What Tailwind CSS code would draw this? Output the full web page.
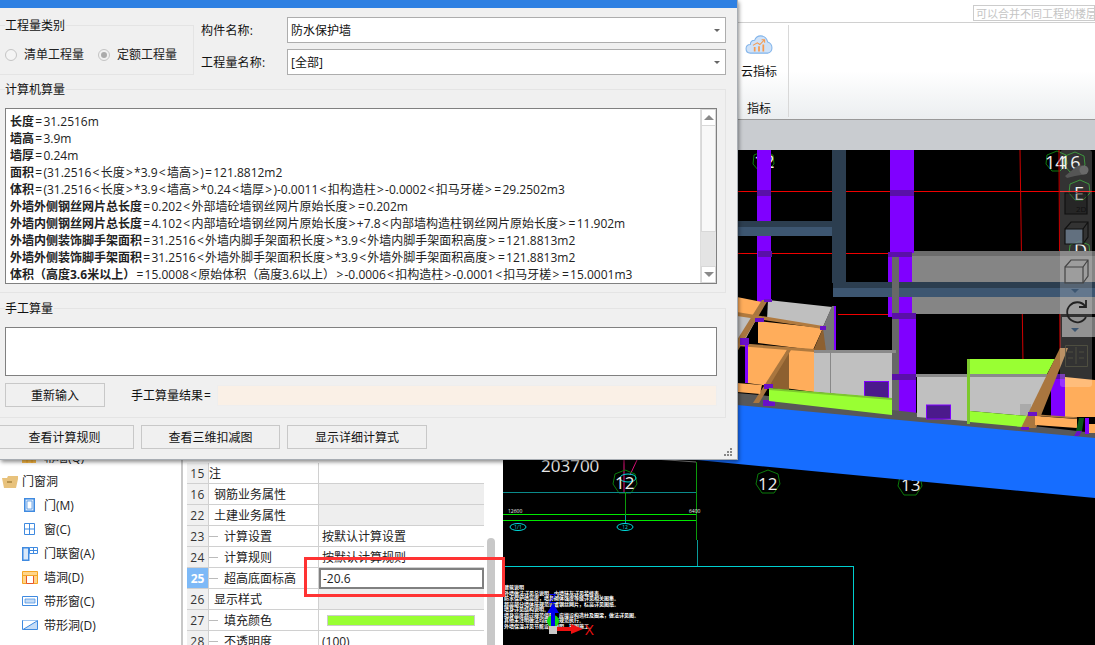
<!DOCTYPE html>
<html lang="zh-CN">
<head>
  <meta charset="UTF-8" />
  <title>工程量</title>
  <script src="https://cdn.jsdelivr.net/npm/@tailwindcss/browser@4"></script>
</head>
<body class="bg-white">
<div class="relative w-[1095px] h-[645px] overflow-hidden text-[12px] leading-[17px] text-[#111] font-['Open_Sans','Noto_Sans_CJK_SC',sans-serif]">

  <!-- main window -->
  <header class="h-[150px] flex flex-col">
    <div class="h-[23px] border-b border-[#d0d0d0] flex justify-end pt-[5px]">
      <div class="w-[122px] h-[16px] border border-[#ccc] pl-[2px] text-[11px] text-[#c4c4c4] leading-[15px] whitespace-nowrap overflow-hidden">可以合并不同工程的楼层</div>
    </div>
    <div class="h-[97px] pl-[737px] flex bg-linear-to-b from-white from-50% to-[#ebeef0] border-b border-[#999]">
      <div class="w-[52px] pr-[7px] my-[2px] border-r border-[#d8d8d8] flex flex-col items-center">
        <svg class="mt-[10px]" width="32" height="22" viewBox="0 0 32 22">
          <path d="M6 21C2 21 1 18 1 16c0-3 2-5 5-5 0-3 2-5 5-5 1-3 4-5 7-5 4 0 7 3 8 7 3 1 5 4 5 7 0 3-2 6-5 6z" fill="#cfe2f8" stroke="#82b4ea" stroke-width="1.2"/>
          <path d="M10 19v-5h2v5zM15 19v-6h2v6zM20 19v-8h2v8z" fill="#f79a4e"/>
          <path d="M9 12l5-3 3 2 5-5M19 5.500h3.500V9" fill="none" stroke="#f79a4e" stroke-width="1.200"/>
        </svg>
        <div class="mt-[9px]">云指标</div>
        <div class="mt-[20px]">指标</div>
      </div>
    </div>
    <div class="flex-1 bg-[#c9ccd0]"></div>
  </header>

  <div class="flex h-[495px]">
    <!-- tree -->
    <aside class="w-[183px] shrink-0 border-r-2 border-[#c8c8c8] pt-[295px] text-[#222]">
      <div class="h-[24px] pl-[22px] flex items-center gap-[6px]">
        <svg width="16" height="12" viewBox="0 0 16 12"><path d="M0 2h14v10H0z" fill="#ffc04d"/><path d="M0 5.500h14M5 2v10M10 2v10" stroke="#f5a623"/></svg>
        <span>幕墙(Q)</span>
      </div>
      <div class="h-[24px] pl-[2px] flex items-center gap-[4px]">
        <svg width="16" height="13" viewBox="0 0 16 13"><path d="M0 3h5l1-2h10v3l-2 9H2z" fill="#e8c27c"/><path d="M5 7h5" stroke="#a8843f" stroke-width="1.500"/></svg>
        <span>门窗洞</span>
      </div>
      <div class="h-[24px] pl-[24px] flex items-center gap-[9px]">
        <svg width="11" height="14" viewBox="0 0 11 14"><path d="M.750.750h9.500v12.500H.750z" fill="#dbe9f9" stroke="#3f8ae0" stroke-width="1.500"/><path d="M3 3h5v8H3z" fill="#fff" stroke="#3f8ae0" stroke-width=".7"/></svg>
        <span>门(M)</span>
      </div>
      <div class="h-[24px] pl-[24px] flex items-center gap-[9px]">
        <svg width="11" height="12" viewBox="0 0 11 12"><path d="M.500.500h10v11H.500zM5.500.500v11M.500 6h10" fill="#fff" stroke="#3f8ae0"/></svg>
        <span>窗(C)</span>
      </div>
      <div class="h-[24px] pl-[22px] flex items-center gap-[6px]">
        <svg width="16" height="15" viewBox="0 0 16 15"><path d="M.750 1.750h6v12.500h-6z" fill="#dbe9f9" stroke="#3f8ae0" stroke-width="1.500"/><path d="M7.500 1.500h8v6h-8zM11.500 1.500v6M7.500 4.500h8" fill="#fff" stroke="#3f8ae0"/></svg>
        <span>门联窗(A)</span>
      </div>
      <div class="h-[24px] pl-[22px] flex items-center gap-[6px]">
        <svg width="16" height="13" viewBox="0 0 16 13"><path d="M.500.500h15v12H.500z" fill="#ffd58a" stroke="#f5a623"/><path d="M4.500 4.500h7v8h-7z" fill="#fff" stroke="#e8562a"/><path d="M.500 4.500h15" stroke="#f5a623"/></svg>
        <span>墙洞(D)</span>
      </div>
      <div class="h-[24px] pl-[22px] flex items-center gap-[6px]">
        <svg width="16" height="10" viewBox="0 0 16 10"><path d="M.500.500h15v9H.500z" fill="#fff" stroke="#3f8ae0"/><path d="M3 3h10v4H3z" fill="#c5dcf6" stroke="#3f8ae0" stroke-width=".7"/></svg>
        <span>带形窗(C)</span>
      </div>
      <div class="h-[24px] pl-[22px] flex items-center gap-[6px]">
        <svg width="16" height="10" viewBox="0 0 16 10"><path d="M.500.500h15v9H.500z" fill="#c5dcf6" stroke="#3f8ae0"/><path d="M1 9.500L15 1V.500H1z" fill="#fff"/><path d="M1 9.500L15 1" stroke="#3f8ae0"/></svg>
        <span>带形洞(D)</span>
      </div>
    </aside>

    <!-- properties -->
    <section class="w-[320px] shrink-0 flex pt-[313px] pl-[4px]">
      <div class="w-[298px] grid grid-cols-[22px_110px_165px] auto-rows-[21px] content-start text-[#222]">
        <div class="bg-[#f0f0f0] border-b border-[#d0d0d0] border-r flex items-center justify-center text-[#333] tracking-[.3px]">15</div>
        <div class="border-b border-r border-[#d0d0d0] flex items-center">注</div>
        <div class="border-b border-[#d0d0d0]"></div>

        <div class="bg-[#f0f0f0] border-b border-[#d0d0d0] border-r flex items-center justify-center text-[#333] tracking-[.3px]">16</div>
        <div class="border-b border-r border-[#d0d0d0] flex items-center pl-[5px]">钢筋业务属性</div>
        <div class="border-b border-[#d0d0d0] bg-[#eee]"></div>

        <div class="bg-[#f0f0f0] border-b border-[#d0d0d0] border-r flex items-center justify-center text-[#333] tracking-[.3px]">22</div>
        <div class="border-b border-r border-[#d0d0d0] flex items-center pl-[5px]">土建业务属性</div>
        <div class="border-b border-[#d0d0d0] bg-[#eee]"></div>

        <div class="bg-[#f0f0f0] border-b border-[#d0d0d0] border-r flex items-center justify-center text-[#333] tracking-[.3px]">23</div>
        <div class="border-b border-r border-[#d0d0d0] flex items-center gap-[6px]"><span class="w-[9px] h-px bg-[#bbb]"></span>计算设置</div>
        <div class="border-b border-[#d0d0d0] flex items-center pl-[3px]">按默认计算设置</div>

        <div class="bg-[#f0f0f0] border-b border-[#d0d0d0] border-r flex items-center justify-center text-[#333] tracking-[.3px]">24</div>
        <div class="border-b border-r border-[#d0d0d0] flex items-center gap-[6px]"><span class="w-[9px] h-px bg-[#bbb]"></span>计算规则</div>
        <div class="border-b border-[#d0d0d0] flex items-center pl-[3px]">按默认计算规则</div>

        <div class="bg-[#7db9f7] border-b border-[#d0d0d0] border-r flex items-center justify-center text-white font-bold">25</div>
        <div class="border-b border-r border-[#d0d0d0] flex items-center gap-[6px]"><span class="w-[9px] h-px bg-[#bbb]"></span>超高底面标高</div>
        <div class="border-2 border-[#808080] flex items-center pl-[2px] bg-white">-20.6</div>

        <div class="bg-[#f0f0f0] border-b border-[#d0d0d0] border-r flex items-center justify-center text-[#333] tracking-[.3px]">26</div>
        <div class="border-b border-r border-[#d0d0d0] flex items-center pl-[5px]">显示样式</div>
        <div class="border-b border-[#d0d0d0] bg-[#eee]"></div>

        <div class="bg-[#f0f0f0] border-b border-[#d0d0d0] border-r flex items-center justify-center text-[#333] tracking-[.3px]">27</div>
        <div class="border-b border-r border-[#d0d0d0] flex items-center gap-[6px]"><span class="w-[9px] h-px bg-[#bbb]"></span>填充颜色</div>
        <div class="border-b border-[#d0d0d0] flex items-center pl-[8px]"><div class="w-[148px] h-[11px] bg-[#99ff33] border border-[#ccc]"></div></div>

        <div class="bg-[#f0f0f0] border-b border-[#d0d0d0] border-r flex items-center justify-center text-[#333] tracking-[.3px]">28</div>
        <div class="border-b border-r border-[#d0d0d0] flex items-center gap-[6px]"><span class="w-[9px] h-px bg-[#bbb]"></span>不透明度</div>
        <div class="border-b border-[#d0d0d0] flex items-center pl-[3px]">(100)</div>
      </div>
      <div class="w-[8px] ml-[2px] mt-[75px] bg-[#c8c8c8] rounded-t-[4px]"></div>
    </section>

    <!-- 3D view -->
    <main class="flex-1 bg-black">
      <svg width="592" height="495" viewBox="503 150 592 495" class="block">
        <!-- plan drawing, lies under the model -->
        <text x="541" y="472" font-size="17" fill="#e8e8e8">203700</text>
        <path d="M640 458L696 462" stroke="#888" fill="none"/>
        <path d="M624 460V492M637 460L630 475" stroke="#e0107a" stroke-width="1" fill="none"/>
        <g fill="none" stroke="#0a7a0a" stroke-width="1">
          <path d="M625 470l10 4 2 10-6 9h-12l-6-9 2-10z"/>
          <path d="M768 470l10 4 2 10-6 9h-12l-6-9 2-10z"/>
          <path d="M910 472l10 4 2 10-6 9h-12l-6-9 2-10z"/>
        </g>
        <ellipse cx="628" cy="478" rx="8" ry="4" fill="none" stroke="#00dede"/>
        <g fill="#eee" font-size="17">
          <text x="615" y="489">12</text>
          <text x="758" y="490">12</text>
          <text x="901" y="491">13</text>
        </g>
        <g shape-rendering="crispEdges" fill="none">
          <path d="M503 492H696" stroke="#0a8a8a"/>
          <path d="M696 462V540" stroke="#0b9a0b"/>
          <path d="M697 540V566" stroke="#0a9a9a"/>
          <path d="M503 514H696M503 520H696" stroke="#00e800"/>
          <path d="M625 492V515" stroke="#0b9a0b"/>
          <path d="M625 515V523" stroke="#0a9a9a"/>
          <path d="M503 566H853M853 566V645" stroke="#00cfcf"/>
        </g>
        <g fill="#eee" font-size="5">
          <text x="508" y="513">12600</text>
          <text x="689" y="513">6400</text>
        </g>
        <ellipse cx="518" cy="527" rx="8" ry="3.500" fill="none" stroke="#00dede"/>
        <ellipse cx="625" cy="527" rx="8" ry="3.500" fill="none" stroke="#00dede"/>
        <g fill="#00dede" font-size="5" text-anchor="middle">
          <text x="518" y="529">1/1</text>
          <text x="625" y="529">12</text>
        </g>
        <g fill="#fff" font-size="5" font-weight="700">
          <text x="504" y="589">建筑说明</text>
          <text x="504" y="595">外墙做法详见总说明，内墙抹灰详见装修表。</text>
          <text x="504" y="600">防水保护墙高度，墙身砌体强度等级详见相关图集。</text>
          <text x="504" y="606">超高部分墙体按规范设置钢丝网片，标高详见图纸。</text>
          <text x="504" y="611">墙身详见结构说明。</text>
          <text x="504" y="617">墙身高度超过规范值时，应增设构造柱及圈梁，做法详见图。</text>
          <text x="504" y="622">其他未注明做法均按现行规范执行。</text>
          <text x="504" y="628">外墙保温详见节能设计说明，按图施工。</text>
        </g>
        <circle cx="553" cy="621" r="6" fill="#11dd11"/>
        <path d="M551 626V613H547L553 603L559 613H555V626z" fill="#0000ee"/>
        <path d="M557 627H571V624L583 629L571 634V631H557z" fill="#ee1111"/>
        <rect x="549" y="626" width="8" height="8" fill="#c8c8c8"/>
        <text x="549" y="603" font-size="13" fill="#0000ee">Z</text>
        <text x="585" y="635" font-size="15" fill="#ee1111">X</text>

        <!-- axis bubbles behind the model -->
        <g fill="none" stroke="#119a11" stroke-width=".8">
          <path d="M764 151l9 4 1 9-7 7h-8l-6-7 1-9z"/>
          <path d="M903 151l9 4 1 9-7 7h-8l-6-7 1-9z"/>
          <path d="M1057 151l9 4 1 9-7 7h-8l-6-7 1-9z"/>
          <path d="M1075 152l9 4 1 9-7 7h-8l-6-7 1-9z"/>
          <path d="M1080 180l9 4 1 9-7 7h-8l-6-7 1-9z"/>
          <path d="M1080 241l9 4 1 9-7 7h-8l-6-7 1-9z"/>
        </g>
        <g fill="#eee" font-size="18">
          <text x="754" y="168">12</text>
          <text x="893" y="168">13</text>
          <text x="1045" y="169">14</text>
          <text x="1060" y="169">16</text>
          <text x="1074" y="200">E</text>
          <text x="1074" y="257">D</text>
        </g>

        <!-- red grid -->
        <path d="M737 191H1095M737 253H1060M838 314H900" stroke="#f00000" shape-rendering="crispEdges" fill="none"/>
        <path d="M1020 150L1023 363M1059 150L1060 350" stroke="#d00000" fill="none"/>

        <!-- beams and columns behind -->
        <rect x="757" y="150" width="14" height="152" fill="#8000ff"/>
        <rect x="757" y="190" width="14" height="6" fill="#5a10a8"/>
        <rect x="758" y="251" width="14" height="6" fill="#5a10a8"/>
        <rect x="912" y="251" width="183" height="63" fill="#858585"/>
        <rect x="912" y="251" width="183" height="5" fill="#6c6c6c"/>
        <rect x="890" y="150" width="24" height="103" fill="#8000ff"/>
        <rect x="890" y="190" width="24" height="6" fill="#5a10a8"/>
        <rect x="888" y="252" width="24" height="65" fill="#8000ff"/>
        <rect x="888" y="252" width="24" height="5" fill="#5a10a8"/>
        <rect x="737" y="221" width="96" height="6" fill="#2c3e50"/>
        <rect x="737" y="227" width="96" height="9" fill="#3d5671"/>
        <rect x="832" y="150" width="14" height="133" fill="#2c3e50"/>
        <rect x="833" y="282" width="262" height="6" fill="#2c3e50"/>
        <rect x="833" y="288" width="262" height="9" fill="#3d5671"/>
        <rect x="892" y="257" width="7" height="160" fill="#686868"/>
        <rect x="899" y="317" width="17" height="100" fill="#8000ff"/>
        <rect x="892" y="313" width="24" height="6" fill="#5a10a8"/>
        <rect x="892" y="374" width="24" height="6" fill="#5a10a8"/>
        <path d="M1062 317H1095V337H1062z" fill="#777"/>

        <!-- blue slab -->
        <path d="M737 404L1095 437V498L697 460V400z" fill="#166dff"/>
        <path d="M737 393L760 395L1095 433V438L737 405z" fill="#585858"/>

        <!-- left rooms -->
        <path d="M737 297L762 302L755 316L737 313z" fill="#ffad5b"/>
        <path d="M768 300L832 307L823 327L767 320z" fill="#bfbfbf"/>
        <path d="M832 306L836 306V351H823V327z" fill="#777"/>
        <rect x="834" y="306" width="2" height="45" fill="#8000ff"/>
        <path d="M737 315L757 318L745 340L737 339z" fill="#bfbfbf"/>
        <path d="M758 321L823 328L813 350L758 343z" fill="#ffad5b"/>
        <path d="M823 328L826 351H813z" fill="#8d6030"/>
        <path d="M762 300L768 300L737 352V340z" fill="#a9763f"/>
        <path d="M737 312L823 326V329L737 316z" fill="#b07a3f"/>
        <path d="M747 345L814 351V392L747 383z" fill="#ffad5b"/>
        <path d="M737 343L814 349V352L737 346z" fill="#b07a3f"/>
        <path d="M787 350L768 388L789 390V350z" fill="#8d6030"/>
        <path d="M787 350L791 350L759 403H753z" fill="#a9763f"/>
        <path d="M737 383L762 385L760 394L737 392z" fill="#ffad5b"/>
        <rect x="745" y="345" width="3" height="38" fill="#8000ff"/>
        <rect x="740" y="338" width="9" height="7" fill="#6a10c8"/>
        <rect x="755" y="318" width="9" height="4" fill="#6a10c8"/>
        <rect x="764" y="384" width="9" height="5" fill="#6a10c8"/>
        <rect x="763" y="400" width="12" height="6" fill="#6a10c8"/>
        <rect x="764" y="299" width="8" height="3" fill="#6a10c8"/>
        <rect x="820" y="326" width="6" height="4" fill="#6a10c8"/>

        <!-- walls -->
        <path d="M814 351H892V399L814 392z" fill="#c0c0c0"/>
        <path d="M814 350H896V353H814z" fill="#8a8a8a"/>
        <path d="M830.500 351V393" stroke="#888" stroke-width="1"/>
        <rect x="864.500" y="381.500" width="24" height="17" fill="#4b1a8c" stroke="#8000ff"/>
        <path d="M769 389L892 399V415L769 401z" fill="#99ff33"/>
        <path d="M769 388L892 398V400L769 390z" fill="#7cc92d"/>
        <path d="M917 374H967V421L917 417z" fill="#c0c0c0"/>
        <rect x="926.500" y="405" width="24" height="14" fill="#4b1a8c" stroke="#8000ff"/>
        <path d="M967 359H1055L1047 374H970z" fill="#99ff33"/>
        <path d="M970 374H1050L1028 416L970 411z" fill="#c0c0c0"/>
        <path d="M916 374H1050V377H916z" fill="#8a8a8a"/>
        <rect x="1020" y="404" width="11" height="11" fill="#aaa"/>
        <path d="M970 411L1028 416L1022 427L970 422z" fill="#99ff33"/>
        <rect x="967" y="359" width="3" height="65" fill="#7cc92d"/>

        <!-- right rooms -->
        <path d="M1065 377L1095 380V417H1065z" fill="#ffad5b"/>
        <rect x="1051" y="374" width="14" height="43" fill="#8000ff"/>
        <rect x="1051" y="374" width="14" height="5" fill="#5a10a8"/>
        <path d="M1060 348L1068 348L1036 428H1021z" fill="#a9763f"/>
        <path d="M1035 416L1077 419V428L1035 425z" fill="#ffad5b"/>
        <path d="M1035 415L1077 418" stroke="#a9763f" stroke-width="1.500"/>
        <rect x="1028" y="412" width="9" height="4" fill="#6a10c8"/>
        <rect x="1021" y="427" width="8" height="3" fill="#6a10c8"/>
        <path d="M1079 418H1084L1082 431H1076z" fill="#0a5a1a"/>
        <path d="M1077 431H1082L1079 436H1074z" fill="#6a10c8"/>
        <rect x="1085" y="418" width="4" height="16" fill="#8000ff"/>
        <path d="M1089 424H1095V433H1089z" fill="#ffad5b"/>

        <!-- view toolbar -->
        <rect x="1060" y="150" width="32" height="237" rx="3" fill="#fff" fill-opacity=".2"/>
        <path d="M1065 176l11-9c4-3 11-1 11 3 0 3-3 5-6 5l-6 1-8 2z" fill="#555"/>
        <circle cx="1084" cy="170" r="4.500" fill="#6a6a6a"/>
        <g fill="none" stroke="#111" stroke-width="1.200">
          <path d="M1065 193h22v21h-22z" fill="#000" fill-opacity=".25"/>
          <path d="M1065 229h18v15h-18z" fill="#6e8092" fill-opacity=".8"/>
          <path d="M1065 229l6-7h17v15l-5 7M1083 229l5-7"/>
          <path d="M1065 267h18v16h-18z" stroke="#444"/>
          <path d="M1065 267l6-7h17v16l-5 7M1083 267l5-7" stroke="#444"/>
          <path d="M1085 306a10 10 0 1 0 1 11M1086 300v7h-7" stroke="#222" stroke-width="1.800"/>
        </g>
        <g fill="none" stroke="#554" stroke-opacity=".8">
          <path d="M1065.500 345.500h22v21h-22zM1076 347v17"/>
          <path d="M1068 352h5M1068 358h5M1079 352h5M1079 358h5"/>
        </g>
        <path d="M1071 289h8l-4 4zM1071 328h8l-4 4z" fill="#3d5671"/>
        <text x="1076" y="212" font-size="8" fill="#111">2D</text>
      </svg>
    </main>
  </div>

  <!-- red mark on the screenshot -->
  <div class="absolute left-[304px] top-[557px] w-[201px] h-[40px] border-[3px] border-[#f33]"></div>

  <!-- dialog -->
  <div class="absolute left-0 top-0 w-[738px] h-[460px] bg-[#f0f0f0] border-r border-b border-[#a8adb3] shadow-[1px_2px_4px_rgba(0,0,0,.45)] flex flex-col">
    <div class="h-[8px] bg-[#2e80e2] shrink-0"></div>

    <div class="flex mt-[9px] ml-[-1px] h-[58px]">
      <fieldset class="w-[195px] h-[58px] border border-[#e4e4e4]">
        <legend class="ml-[5px] pr-[1px] h-[17px]">工程量类别</legend>
        <div class="flex items-center mt-[12px] ml-[5px] text-[#222]">
          <span class="w-[12px] h-[12px] rounded-full border border-[#c4c4c4] bg-[#f4f4f4]"></span>
          <span class="ml-[7px]">清单工程量</span>
          <span class="ml-[14px] w-[12px] h-[12px] rounded-full border border-[#c4c4c4] flex items-center justify-center"><span class="w-[6px] h-[6px] rounded-full bg-[#aaa]"></span></span>
          <span class="ml-[7px]">定额工程量</span>
        </div>
      </fieldset>
      <div class="ml-[7px] flex flex-col gap-[6px]">
        <div class="flex items-center">
          <span class="w-[86px] tracking-[.2px]">构件名称:</span>
          <div class="w-[439px] h-[26px] bg-white border border-[#adadad] flex items-center justify-between pl-[3px] pr-[5px]">防水保护墙<span class="w-0 h-0 border-x-[3px] border-x-transparent border-t-[3px] border-t-[#666]"></span></div>
        </div>
        <div class="flex items-center">
          <span class="w-[86px] tracking-[.2px]">工程量名称:</span>
          <div class="w-[439px] h-[26px] bg-white border border-[#adadad] flex items-center justify-between pl-[3px] pr-[5px]">[全部]<span class="w-0 h-0 border-x-[3px] border-x-transparent border-t-[3px] border-t-[#666]"></span></div>
        </div>
      </div>
    </div>

    <fieldset class="mt-[6px] ml-[-1px] w-[727px] h-[212px] border border-[#e4e4e4] pl-[5px]">
      <legend class="pr-[1px] h-[17px]">计算机算量</legend>
      <div class="mt-[10px] w-[712px] h-[176px] bg-white border border-[#808080] flex pl-[4px] pt-[4px]">
        <div id="calcLines" class="flex-1 whitespace-nowrap overflow-hidden text-[#222]"></div>
        <div class="w-[16px] mt-[-4px] flex flex-col bg-[#e4e4e4] border-l border-[#ddd]">
          <div class="h-[17px] bg-white border border-[#d8d8d8] flex items-center justify-center"><span class="w-0 h-0 border-x-[5px] border-x-transparent border-b-[5px] border-b-[#8a8a8a]"></span></div>
          <div class="h-[106px] bg-[#f8f8f8] border-x border-b border-[#d8d8d8]"></div>
          <div class="flex-1"></div>
          <div class="h-[17px] bg-white border border-[#d8d8d8] flex items-center justify-center"><span class="w-0 h-0 border-x-[5px] border-x-transparent border-t-[5px] border-t-[#8a8a8a]"></span></div>
        </div>
      </div>
    </fieldset>

    <fieldset class="mt-[7px] ml-[-1px] w-[727px] h-[118px] border border-[#e4e4e4] pl-[5px]">
      <legend class="pr-[1px] h-[17px]">手工算量</legend>
      <div class="mt-[10px] w-[712px] h-[49px] bg-white border border-[#808080]"></div>
      <div class="mt-[7px] flex items-center">
        <div class="w-[100px] h-[24px] border border-[#c8c8c8] bg-[#f0f0f0] flex items-center justify-center">重新输入</div>
        <span class="ml-[26px] w-[86px] whitespace-nowrap">手工算量结果<span class="px-[1px]">=</span></span>
        <div class="w-[500px] h-[21px] bg-[#faf0e6] border border-[#eee]"></div>
      </div>
    </fieldset>

    <div class="mt-[7px] ml-[-5px] flex gap-[7px]">
      <div class="w-[139px] h-[24px] border border-[#c8c8c8] flex items-center justify-center">查看计算规则</div>
      <div class="w-[139px] h-[24px] border border-[#c8c8c8] flex items-center justify-center">查看三维扣减图</div>
      <div class="w-[140px] h-[24px] border border-[#c8c8c8] flex items-center justify-center">显示详细计算式</div>
    </div>

    <div class="flex justify-end pr-[4px] mt-[-1px]">
      <svg width="9" height="9" viewBox="0 0 9 9" fill="#888"><path d="M6 0h2v2H6zM3 3h2v2H3zM6 3h2v2H6zM0 6h2v2H0zM3 6h2v2H3zM6 6h2v2H6z"/></svg>
    </div>
  </div>
</div>

<script>
  // 计算式: < > = are set wider than Open Sans draws them
  const lignes = [
    ["长度", "=31.2516m"],
    ["墙高", "=3.9m"],
    ["墙厚", "=0.24m"],
    ["面积", "=(31.2516<长度>*3.9<墙高>)=121.8812m2"],
    ["体积", "=(31.2516<长度>*3.9<墙高>*0.24<墙厚>)-0.0011<扣构造柱>-0.0002<扣马牙槎>=29.2502m3"],
    ["外墙外侧钢丝网片总长度", "=0.202<外部墙砼墙钢丝网片原始长度>=0.202m"],
    ["外墙内侧钢丝网片总长度", "=4.102<内部墙砼墙钢丝网片原始长度>+7.8<内部墙构造柱钢丝网片原始长度>=11.902m"],
    ["外墙内侧装饰脚手架面积", "=31.2516<外墙内脚手架面积长度>*3.9<外墙内脚手架面积高度>=121.8813m2"],
    ["外墙外侧装饰脚手架面积", "=31.2516<外墙外脚手架面积长度>*3.9<外墙外脚手架面积高度>=121.8813m2"],
    ["体积（高度3.6米以上）", "=15.0008<原始体积（高度3.6以上）>-0.0006<扣构造柱>-0.0001<扣马牙槎>=15.0001m3"]
  ];
  const conteneur = document.getElementById("calcLines");
  lignes.forEach(([nom, formule]) => {
    const ligne = document.createElement("div");
    ligne.className = "h-[17px]";
    const b = document.createElement("b");
    b.className = "font-bold";
    b.textContent = nom;
    ligne.appendChild(b);
    formule.split(/([<>=])/).forEach(morceau => {
      if (!morceau) return;
      const s = document.createElement("span");
      if ("<>=".includes(morceau)) s.className = "px-[1.25px]";
      s.textContent = morceau;
      ligne.appendChild(s);
    });
    conteneur.appendChild(ligne);
  });
</script>
</body>
</html>
